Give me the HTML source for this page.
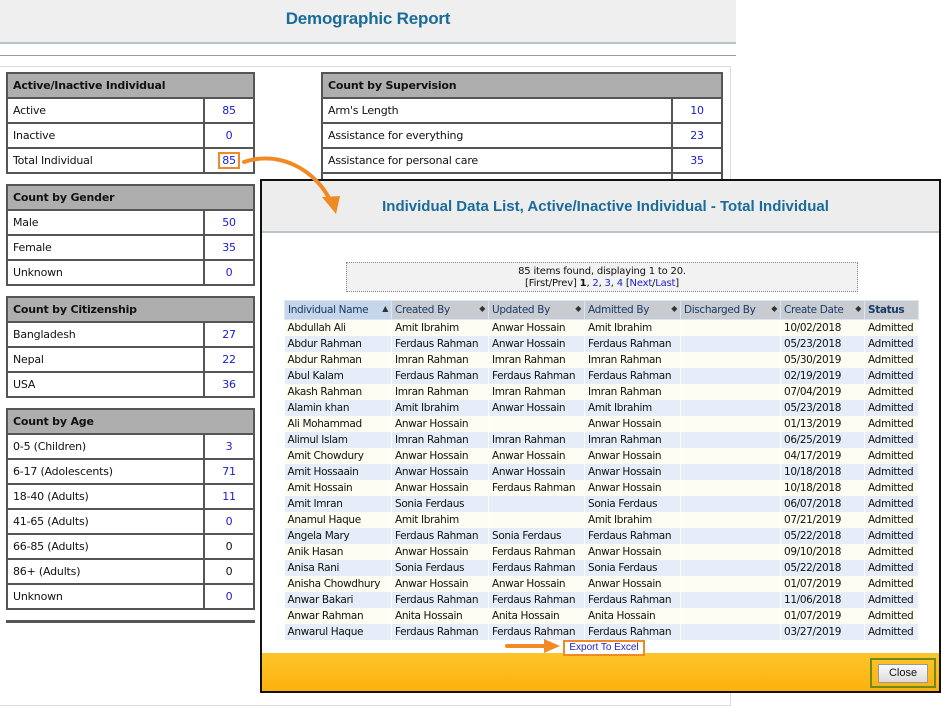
<!DOCTYPE html>
<html><head><meta charset="utf-8"><style>
*{margin:0;padding:0;box-sizing:border-box}
body{width:941px;height:694px;overflow:hidden;background:#fff;font-family:"DejaVu Sans",Verdana,sans-serif;font-size:11px;color:#111;position:relative}
.abs{position:absolute}
.hdr{left:0;top:0;width:736px;height:44px;background:#efefef;border-bottom:2px solid #b9c3c8}
.hdr h1{font-family:"Liberation Sans",sans-serif;font-weight:bold;font-size:17px;color:#1a6b99;text-align:center;line-height:38px;letter-spacing:-0.2px}
.l2{left:0;top:55px;width:736px;height:1px;background:#999}
.frame{left:0;top:66px;width:731px;height:640px;border:1px solid #ddd;border-left:none}
table.s{position:absolute;border-collapse:collapse;background:#fff}
table.s td,table.s th{border:2px solid #555;height:25px;padding:0 5px;font-size:11px;font-weight:normal;text-align:left;letter-spacing:-0.2px}
table.s th{background:#aeaeae;font-weight:bold;color:#111}
table.s td.v{text-align:center;color:#1a1ad0;width:50px}
table.s td.k{color:#111}
.modal{left:260px;top:179px;width:681px;height:514px;border:2px solid #111;background:#fff}
.mh{left:0;top:0;width:677px;height:52px;background:#ededed;border-bottom:2px solid #b9c3c8}
.mh h2{font-family:"Liberation Sans",sans-serif;font-weight:bold;font-size:15px;color:#1a6b99;text-align:center;line-height:52px;padding-left:10px}
.pager{left:84px;top:81px;width:512px;height:30px;border:1px dotted #888;background:#f2f2f2;text-align:center;font-size:10px;line-height:12px;padding-top:3px;letter-spacing:-0.2px}
.pager a{color:#2222cc}
table.d{position:absolute;left:22px;top:119px;width:635px;border-collapse:collapse;font-size:10.5px;letter-spacing:-0.35px;table-layout:fixed}
table.d th{background:#c8ccd1;border:1px solid #dbe6f5;height:19px;text-align:left;font-weight:normal;padding:0 3px;color:#1b3b66;white-space:nowrap;overflow:hidden;font-size:10.5px}
table.d th:first-child{background:#c5d6ea}
table.d th i{font-style:normal;position:absolute;margin-left:0;font-size:8px;color:#333}
table.d th span{float:right;font-size:8px;color:#333}
table.d td{height:16px;padding:0 3px;white-space:nowrap;overflow:hidden;border-right:1px solid #fff}
table.d tr:nth-child(odd) td{background:#e6edf9}
table.d tr:nth-child(even) td{background:#fdfdf3}
.exp{left:301px;top:459px;width:82px;height:16px;border:2px solid #f08a24;color:#2222cc;font-family:"Liberation Sans",sans-serif;font-size:10px;text-align:center;line-height:12px;background:#fff}
.foot{left:0;top:472px;width:677px;height:38px;background:linear-gradient(#fdc52a,#fdb10f)}
.closeb{left:608px;top:477px;width:66px;height:30px;border:2px solid #6f8a1c}
.closeb div{position:absolute;left:6px;top:4px;width:50px;height:19px;background:linear-gradient(#fafafa,#dcdcdc);border:1px solid #999;font-family:"Liberation Sans",sans-serif;font-size:11px;text-align:center;line-height:17px}
</style></head><body>
<div class="abs hdr"><h1>Demographic Report</h1></div>
<div class="abs l2"></div>
<div class="abs frame"></div>

<table class="s" style="left:6px;top:72px;width:249px">
<tr><th colspan="2">Active/Inactive Individual</th></tr>
<tr><td class="k">Active</td><td class="v">85</td></tr>
<tr><td class="k">Inactive</td><td class="v">0</td></tr>
<tr><td class="k">Total Individual</td><td class="v"><span style="border:2px solid #f08a24;padding:0 2px">85</span></td></tr>
</table>
<table class="s" style="left:6px;top:184px;width:249px">
<tr><th colspan="2">Count by Gender</th></tr>
<tr><td class="k">Male</td><td class="v">50</td></tr>
<tr><td class="k">Female</td><td class="v">35</td></tr>
<tr><td class="k">Unknown</td><td class="v">0</td></tr>
</table>
<table class="s" style="left:6px;top:296px;width:249px">
<tr><th colspan="2">Count by Citizenship</th></tr>
<tr><td class="k">Bangladesh</td><td class="v">27</td></tr>
<tr><td class="k">Nepal</td><td class="v">22</td></tr>
<tr><td class="k">USA</td><td class="v">36</td></tr>
</table>
<table class="s" style="left:6px;top:408px;width:249px">
<tr><th colspan="2">Count by Age</th></tr>
<tr><td class="k">0-5 (Children)</td><td class="v">3</td></tr>
<tr><td class="k">6-17 (Adolescents)</td><td class="v">71</td></tr>
<tr><td class="k">18-40 (Adults)</td><td class="v">11</td></tr>
<tr><td class="k">41-65 (Adults)</td><td class="v">0</td></tr>
<tr><td class="k">66-85 (Adults)</td><td class="v" style="color:#111">0</td></tr>
<tr><td class="k">86+ (Adults)</td><td class="v" style="color:#111">0</td></tr>
<tr><td class="k">Unknown</td><td class="v">0</td></tr>
</table>
<div class="abs" style="left:6px;top:620px;width:249px;height:3px;background:#555"></div>

<table class="s" style="left:321px;top:72px;width:402px">
<tr><th colspan="2">Count by Supervision</th></tr>
<tr><td class="k">Arm's Length</td><td class="v">10</td></tr>
<tr><td class="k">Assistance for everything</td><td class="v">23</td></tr>
<tr><td class="k">Assistance for personal care</td><td class="v">35</td></tr>
<tr><td class="k">&nbsp;</td><td class="v"></td></tr>
</table>

<div class="abs modal">
<div class="abs mh"><h2>Individual Data List, Active/Inactive Individual - Total Individual</h2></div>
<div class="abs pager">85 items found, displaying 1 to 20.<br>[First/Prev] <b>1</b>, <a>2</a>, <a>3</a>, <a>4</a> [<a>Next</a>/<a>Last</a>]</div>
<table class="d">
<colgroup><col style="width:107px"><col style="width:97px"><col style="width:96px"><col style="width:96px"><col style="width:100px"><col style="width:84px"><col></colgroup>
<tr><th>Individual Name <span>▲</span></th><th>Created By <span>◆</span></th><th>Updated By <span>◆</span></th><th>Admitted By <span>◆</span></th><th>Discharged By <span>◆</span></th><th>Create Date <span>◆</span></th><th style="font-weight:bold">Status</th></tr>
<tr><td>Abdullah Ali</td><td>Amit Ibrahim</td><td>Anwar Hossain</td><td>Amit Ibrahim</td><td></td><td>10/02/2018</td><td>Admitted</td></tr>
<tr><td>Abdur Rahman</td><td>Ferdaus Rahman</td><td>Anwar Hossain</td><td>Ferdaus Rahman</td><td></td><td>05/23/2018</td><td>Admitted</td></tr>
<tr><td>Abdur Rahman</td><td>Imran Rahman</td><td>Imran Rahman</td><td>Imran Rahman</td><td></td><td>05/30/2019</td><td>Admitted</td></tr>
<tr><td>Abul Kalam</td><td>Ferdaus Rahman</td><td>Ferdaus Rahman</td><td>Ferdaus Rahman</td><td></td><td>02/19/2019</td><td>Admitted</td></tr>
<tr><td>Akash Rahman</td><td>Imran Rahman</td><td>Imran Rahman</td><td>Imran Rahman</td><td></td><td>07/04/2019</td><td>Admitted</td></tr>
<tr><td>Alamin khan</td><td>Amit Ibrahim</td><td>Anwar Hossain</td><td>Amit Ibrahim</td><td></td><td>05/23/2018</td><td>Admitted</td></tr>
<tr><td>Ali Mohammad</td><td>Anwar Hossain</td><td></td><td>Anwar Hossain</td><td></td><td>01/13/2019</td><td>Admitted</td></tr>
<tr><td>Alimul Islam</td><td>Imran Rahman</td><td>Imran Rahman</td><td>Imran Rahman</td><td></td><td>06/25/2019</td><td>Admitted</td></tr>
<tr><td>Amit Chowdury</td><td>Anwar Hossain</td><td>Anwar Hossain</td><td>Anwar Hossain</td><td></td><td>04/17/2019</td><td>Admitted</td></tr>
<tr><td>Amit Hossaain</td><td>Anwar Hossain</td><td>Anwar Hossain</td><td>Anwar Hossain</td><td></td><td>10/18/2018</td><td>Admitted</td></tr>
<tr><td>Amit Hossain</td><td>Anwar Hossain</td><td>Ferdaus Rahman</td><td>Anwar Hossain</td><td></td><td>10/18/2018</td><td>Admitted</td></tr>
<tr><td>Amit Imran</td><td>Sonia Ferdaus</td><td></td><td>Sonia Ferdaus</td><td></td><td>06/07/2018</td><td>Admitted</td></tr>
<tr><td>Anamul Haque</td><td>Amit Ibrahim</td><td></td><td>Amit Ibrahim</td><td></td><td>07/21/2019</td><td>Admitted</td></tr>
<tr><td>Angela Mary</td><td>Ferdaus Rahman</td><td>Sonia Ferdaus</td><td>Ferdaus Rahman</td><td></td><td>05/22/2018</td><td>Admitted</td></tr>
<tr><td>Anik Hasan</td><td>Anwar Hossain</td><td>Ferdaus Rahman</td><td>Anwar Hossain</td><td></td><td>09/10/2018</td><td>Admitted</td></tr>
<tr><td>Anisa Rani</td><td>Sonia Ferdaus</td><td>Ferdaus Rahman</td><td>Sonia Ferdaus</td><td></td><td>05/22/2018</td><td>Admitted</td></tr>
<tr><td>Anisha Chowdhury</td><td>Anwar Hossain</td><td>Anwar Hossain</td><td>Anwar Hossain</td><td></td><td>01/07/2019</td><td>Admitted</td></tr>
<tr><td>Anwar Bakari</td><td>Ferdaus Rahman</td><td>Ferdaus Rahman</td><td>Ferdaus Rahman</td><td></td><td>11/06/2018</td><td>Admitted</td></tr>
<tr><td>Anwar Rahman</td><td>Anita Hossain</td><td>Anita Hossain</td><td>Anita Hossain</td><td></td><td>01/07/2019</td><td>Admitted</td></tr>
<tr><td>Anwarul Haque</td><td>Ferdaus Rahman</td><td>Ferdaus Rahman</td><td>Ferdaus Rahman</td><td></td><td>03/27/2019</td><td>Admitted</td></tr>
</table>
<div class="abs foot"></div>
<div class="abs exp">Export To Excel</div>
<div class="abs closeb"><div>Close</div></div>
</div>

<svg class="abs" style="left:0;top:0" width="941" height="694">
<path d="M244 162 C280 150 315 170 330 200" fill="none" stroke="#f08a24" stroke-width="4" stroke-linecap="round"/>
<polygon points="322,197 340,196 336,214" fill="#f08a24"/>
<line x1="507" y1="646" x2="546" y2="646" stroke="#f08a24" stroke-width="4" stroke-linecap="round"/>
<polygon points="544,639 560,646 544,653" fill="#f08a24"/>
</svg>
</body></html>
